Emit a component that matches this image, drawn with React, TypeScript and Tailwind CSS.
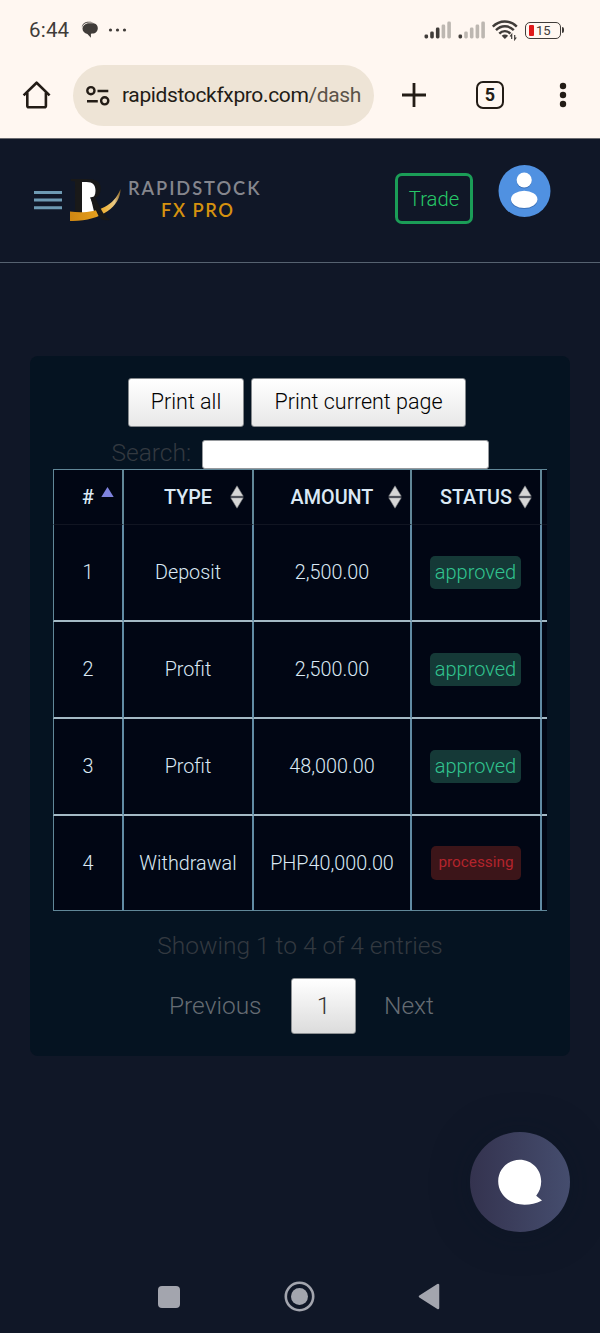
import clsx from "clsx";

const rows = [
  { id: 1, type: "Deposit", amount: "2,500.00", status: "approved" },
  { id: 2, type: "Profit", amount: "2,500.00", status: "approved" },
  { id: 3, type: "Profit", amount: "48,000.00", status: "approved" },
  { id: 4, type: "Withdrawal", amount: "PHP40,000.00", status: "processing" },
];

const StatusBar = () => {
  return (
    <div className="flex h-[60px] items-center pl-[29px] pr-9 text-[#403c39]">
      <span className="w-[42px] whitespace-nowrap pt-px text-[20.5px] leading-none tracking-[0.2px]">6:44</span>
      <svg className="ml-[10px]" width="18" height="18" viewBox="0 0 18 18" fill="#403c39">
        <path d="M.8 6.500C1 2.600 4 .8 8 .8c2 0 3.500.2 4.500.8H8C4.500 1.600 2 3.200.8 6.500z" />
        <path d="M8.300 2.300h3.600c3 0 4.900 2.200 4.900 4.900 0 3-2.300 5.200-5.300 5.400l-1.600.1v4l-3.500-3.700C3.500 12.400 1.500 10.400 1.500 7.800c0-3 2.800-5.500 6.800-5.500z" />
      </svg>
      <svg className="ml-[9px]" width="20" height="6" viewBox="0 0 20 6" fill="#403c39">
        <circle cx="2.5" cy="3" r="1.6" />
        <circle cx="9.5" cy="3" r="1.6" />
        <circle cx="16.5" cy="3" r="1.6" />
      </svg>
      <div className="ml-auto flex items-center">
        <Signal level={3} />
        <Signal level={1} />
        <svg width="28" height="22" viewBox="0 0 28 22" fill="none" stroke="#403c39" strokeWidth="2.4">
          <path d="M1.8 7.7C8.6.8 19 .8 25.8 7.7" />
          <path d="M5 11.2c5-5.2 12.8-5.2 17.8 0" />
          <path d="M8.3 14.6c3.1-3.3 8-3.3 11.1 0" />
          <path d="M13.9 20l-3.200-3.200c1.700-1.600 4.700-1.600 6.400 0z" fill="#403c39" stroke="none" />
          <path d="M20.7 20v-4.500l-1.600 2M23.7 16v4.500l1.600-2" strokeWidth="1.2" />
        </svg>
        <div className="ml-1.5 flex h-[17px] w-[36px] items-center rounded-[5px] border-[1.5px] border-[#403c39] pl-[2.5px]">
          <span className="h-[11px] w-[5px] rounded-[1px] bg-[#e01919]" />
          <span className="ml-[2.5px] text-[13px] leading-none">15</span>
        </div>
        <span className="ml-px h-[6px] w-[2px] rounded-r bg-[#403c39]" />
      </div>
    </div>
  );
};

const Signal = ({ level }: { level: number }) => {
  return (
    <svg className="mr-[5.5px]" width="28" height="18" viewBox="0 0 28 18">
      {[4, 7, 11, 14, 17].map((h, i) => (
        <rect
          key={h}
          x={0.5 + i * 5.7}
          y={17.5 - h}
          width="3.6"
          height={h}
          rx="1.4"
          fill={i < level ? "#403c39" : "#bdb7b1"}
        />
      ))}
    </svg>
  );
};

const BrowserBar = () => {
  return (
    <div className="flex h-[79px] items-start border-b border-[#6b6b70] pl-[22px] pt-[5px] text-[#231c16]">
      <svg className="mt-[14px] shrink-0" width="29" height="32" viewBox="0 0 29 32" fill="none" stroke="#231c16" strokeWidth="2.6">
        <path d="M1.6 16.4L14.6 3.7l13 12.7" strokeLinejoin="round" />
        <path d="M5.3 13.5v13.2a1.5 1.5 0 0 0 1.5 1.5h15.6a1.5 1.5 0 0 0 1.5-1.5V13.5" />
      </svg>
      <div className="ml-[22px] flex h-[61px] w-[301px] items-center rounded-full bg-[#eee4d6] pl-3">
        <svg className="shrink-0" width="26" height="22" viewBox="0 0 26 22" fill="none" stroke="#231c16" strokeWidth="2.4">
          <circle cx="5.9" cy="5.7" r="3.6" />
          <path d="M12.5 6h10.8M2 16.2h10.8" />
          <circle cx="19.7" cy="15.8" r="3.6" />
        </svg>
        <span className="ml-[11px] whitespace-nowrap text-[21px] leading-none tracking-[-0.36px]">
          rapidstockfxpro.com<span className="text-[#5b5349]">/dash</span>
        </span>
      </div>
      <svg className="ml-[27px] mt-[17px] shrink-0" width="26" height="26" viewBox="0 0 26 26" stroke="#231c16" strokeWidth="2.8">
        <path d="M13 1v24M1 13h24" />
      </svg>
      <div className="ml-[49px] mt-4 flex h-7 w-7 items-center justify-center rounded-[7px] border-[2.6px] border-[#231c16] text-[18px] font-bold leading-none">
        5
      </div>
      <svg className="ml-[55px] mt-[17px]" width="8" height="26" viewBox="0 0 8 26" fill="#231c16">
        <circle cx="4" cy="4" r="3.2" />
        <circle cx="4" cy="13" r="3.2" />
        <circle cx="4" cy="22" r="3.2" />
      </svg>
    </div>
  );
};

const Logo = () => {
  return (
    <svg width="194" height="65" viewBox="0 -17 194 65" className="ml-[7px] mt-[20px] shrink-0">
      <defs>
        <linearGradient id="swoosh" x1="0" x2="1">
          <stop offset="0" stopColor="#cf8712" />
          <stop offset="0.5" stopColor="#e39d1c" />
          <stop offset="0.72" stopColor="#f0b948" />
          <stop offset="0.88" stopColor="#e8c987" />
          <stop offset="1" stopColor="#8a6424" />
        </linearGradient>
      </defs>
      <text
        x="1"
        y="37.5"
        fontFamily="Liberation Serif, serif"
        fontWeight="700"
        fontSize="52"
        textLength="36"
        lengthAdjust="spacingAndGlyphs"
        fill="#191919"
      >
        R
      </text>
      <path d="M13 6h4.500c6.500 0 9 3.200 9 8.800 0 4.500-1.700 7-4.500 8.200l3.500 14.500H13z" fill="#fff" />
      <path d="M1 35.500c20 3 43-2 50.500-22.500C52 30 31 46 1 45z" fill="url(#swoosh)" />
      <path d="M21 21.500l4.500-1L33 35c2 3.500 4 6.500 8.500 9-6 1-9.500 0-12-4z" fill="#191919" />
      <g fontFamily="Lato, sans-serif" fontWeight="600">
        <text x="59" y="18.800" fontSize="18.300" fill="#85868d" textLength="131.5">RAPIDSTOCK</text>
        <text x="92" y="40.700" fontSize="18.300" fill="#d5920f" textLength="72">FX PRO</text>
      </g>
    </svg>
  );
};

const Header = () => {
  return (
    <header className="flex h-[124px] items-start border-b border-[#566270] pl-[34px]">
      <svg className="mt-[51px]" width="28" height="20" viewBox="0 0 28 20" stroke="#6e9ab3" strokeWidth="3">
        <path d="M0 2.500h28M0 10.100h28M0 17.800h28" />
      </svg>
      <Logo />
      <a className="ml-[132px] mt-[34px] flex h-[51px] w-[78px] items-center justify-center rounded-[7px] border-[3px] border-[#1b9d57] pt-px text-[20.3px] font-light text-[#27c868]">
        Trade
      </a>
      <svg className="ml-6 mt-[25px]" width="54" height="54" viewBox="0 0 54 54">
        <circle cx="27.5" cy="27" r="26" fill="#5091e1" />
        <ellipse cx="27.2" cy="36.5" rx="13.2" ry="8.6" fill="#3d74bb" />
        <circle cx="27.2" cy="16.8" r="7.6" fill="#3d74bb" />
        <ellipse cx="27.2" cy="35.3" rx="13.2" ry="8.6" fill="#fff" />
        <circle cx="27.2" cy="16" r="7.6" fill="#fff" />
      </svg>
    </header>
  );
};

const SortIcon = () => {
  return (
    <svg className="absolute right-2 top-[15px]" width="14" height="24" viewBox="0 0 14 24" fill="#d6d6d6" stroke="#77787c" strokeWidth="0.6">
      <path d="M7 .8l6.300 10.400H.7z" />
      <path d="M7 23.200L.7 12.800h12.600z" />
    </svg>
  );
};

const TransactionsTable = () => {
  return (
    <div className="w-[494px] overflow-hidden">
      <table className="w-[640px] table-fixed border-separate border-spacing-0 bg-[#010614] text-center text-[19.8px] font-light text-[#dbe9f5]">
        <thead>
          <tr className="h-14">
            <th className="relative w-[71px] border border-r-2 border-[#618798] border-b-[#111522] p-0 pt-[2px] font-medium">
              #
              <svg className="absolute right-2 top-4" width="13" height="12" viewBox="0 0 13 12">
                <path d="M6.500 1l6.200 10H.3z" fill="#7f83df" />
              </svg>
            </th>
            <th className="relative w-[130px] border-y border-r-2 border-[#618798] border-b-[#111522] p-0 pt-[2px] font-medium">
              TYPE
              <SortIcon />
            </th>
            <th className="relative w-[158px] border-y border-r-2 border-[#618798] border-b-[#111522] p-0 pt-[2px] font-medium">
              AMOUNT
              <SortIcon />
            </th>
            <th className="relative w-[130px] border-y border-r-2 border-[#618798] border-b-[#111522] p-0 pt-[2px] font-medium">
              STATUS
              <SortIcon />
            </th>
            <th className="border-y border-[#618798] border-b-[#111522]" />
          </tr>
        </thead>
        <tbody>
          {rows.map((row, i) => {
            const last = i === rows.length - 1;
            const cell = clsx(
              "border-r-2 border-r-[#618ba4] p-0",
              last ? "border-b border-b-[#618798]" : "border-b-2 border-b-[#a4b9c5]",
            );
            const text = clsx(cell, "pt-0.5");
            return (
              <tr key={row.id} className={i === 0 ? "h-[96.5px]" : last ? "h-[95.5px]" : "h-[97px]"}>
                <td className={clsx(text, "border-l border-l-[#618798]")}>{row.id}</td>
                <td className={text}>{row.type}</td>
                <td className={text}>{row.amount}</td>
                <td className={cell}>
                  {row.status === "approved" ? (
                    <span className="mr-px inline-flex h-[33px] w-[91px] items-center justify-center rounded-[5px] bg-[#153937] align-middle text-[20px] text-[#31c48f]">
                      approved
                    </span>
                  ) : (
                    <span className="inline-flex h-[34px] w-[90px] items-center justify-center rounded-[5px] bg-[#3c1519] align-middle text-[15.3px] font-normal text-[#b3242c]">
                      processing
                    </span>
                  )}
                </td>
                <td className={cell} />
              </tr>
            );
          })}
        </tbody>
      </table>
    </div>
  );
};

const Card = () => {
  return (
    <section className="mx-[30px] mt-[93px] flex h-[700px] flex-col rounded-lg bg-[#051321] px-[23px] pt-[22px] font-light">
      <div className="flex h-[49px] gap-[7px] pl-[75px] text-[21.5px] text-black">
        <button className="w-[116px] rounded-[3px] border border-[#85898d] bg-linear-to-b from-white to-[#e8e8e8]">
          Print all
        </button>
        <button className="w-[215px] rounded-[3px] border border-[#85898d] bg-linear-to-b from-white to-[#e8e8e8]">
          Print current page
        </button>
      </div>
      <label className="mt-[13px] flex h-[29px] items-center pl-[58.5px] text-[24.5px] leading-none text-[#333940]">
        <span className="w-[90.5px] pb-0.5">Search:</span>
        <input className="h-[29px] w-[287px] rounded-[3px] border border-[#96999d] bg-white" />
      </label>
      <TransactionsTable />
      <p className="mt-[19px] text-center text-[24.5px] leading-8 text-[#333940]">
        Showing 1 to 4 of 4 entries
      </p>
      <div className="mt-4 flex h-14 items-center pl-[116px] text-[24.5px] text-[#666c73]">
        <span className="w-[122px]">Previous</span>
        <span className="flex h-14 w-[65px] items-center justify-center rounded-[3px] border border-[#8d9093] bg-linear-to-b from-white to-[#dcdcdc] text-[#333]">
          1
        </span>
        <span className="ml-7">Next</span>
      </div>
    </section>
  );
};

const App = () => {
  return (
    <div className="relative flex h-[1333px] w-[600px] flex-col overflow-hidden bg-[#101727] font-[Roboto,sans-serif]">
      <div className="bg-[#fff7f1]">
        <StatusBar />
        <BrowserBar />
      </div>
      <Header />
      <Card />
      <button className="absolute left-[470px] top-[1132px] flex h-[100px] w-[100px] items-center justify-center rounded-full bg-linear-to-r from-[#34334f] to-[#454d6e] shadow-[0_2px_36px_rgba(10,22,38,0.5)]">
        <svg width="46" height="46" viewBox="0 0 46 46" fill="#fff">
          <path d="M22.7.8c12 0 21.5 9.600 21.500 21.500 0 5.700-1.800 10.500-5 14.500l5.800 4.700c-6 3.200-11.500 4.200-17.500 4.200C12 45.700 1.200 35 1.200 22.300 1.200 10.400 10.800.8 22.700.8z" />
        </svg>
      </button>
      <nav className="mt-auto flex h-[73px] items-center pl-[158px]">
        <span className="h-[22px] w-[22px] rounded-[4px] bg-[#a3a5ae]" />
        <svg className="ml-[104px]" width="31" height="31" viewBox="0 0 31 31">
          <circle cx="15.5" cy="15.5" r="13.7" fill="none" stroke="#a3a5ae" strokeWidth="2.6" />
          <circle cx="15.5" cy="15.5" r="8.5" fill="#a3a5ae" />
        </svg>
        <svg className="ml-[103px]" width="22" height="27" viewBox="0 0 22 27">
          <path d="M20 2v23L2 13.500z" fill="#a3a5ae" stroke="#a3a5ae" strokeWidth="2.5" strokeLinejoin="round" />
        </svg>
      </nav>
    </div>
  );
};

export default App;
